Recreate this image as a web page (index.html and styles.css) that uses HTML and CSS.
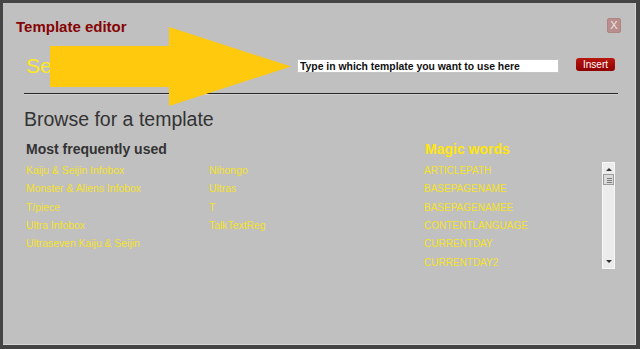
FILE: index.html
```html
<!DOCTYPE html>
<html lang="en">
<head>
    <meta charset="UTF-8">
    <meta name="viewport" content="width=device-width, initial-scale=1.0">
    <title>Template editor</title>
    <link rel="stylesheet" href="styles.css">
</head>
<body>
    <div class="dialog">
        <header class="dialog-header">
            <h1>Template editor</h1>
            <button class="close" type="button">X</button>
        </header>

        <div class="dialog-body">
            <form class="search-row" action="#">
                <span class="search-label">Select a template</span>
                <input type="text" class="template-input" value="Type in which template you want to use here">
                <button type="submit" class="insert">Insert</button>
            </form>

            <hr class="divider">

            <h2>Browse for a template</h2>

            <div class="browse">
                <section class="frequent">
                    <h3>Most frequently used</h3>
                    <ul class="template-list">
                        <li><a href="#">Kaiju &amp; Seijin Infobox</a></li>
                        <li><a href="#">Monster &amp; Aliens Infobox</a></li>
                        <li><a href="#">T/piece</a></li>
                        <li><a href="#">Ultra Infobox</a></li>
                        <li><a href="#">Ultraseven Kaiju &amp; Seijin</a></li>
                        <li><a href="#">Nihongo</a></li>
                        <li><a href="#">Ultras</a></li>
                        <li><a href="#">T</a></li>
                        <li><a href="#">TalkTextReg</a></li>
                    </ul>
                </section>

                <section class="magic">
                    <h3>Magic words</h3>
                    <div class="magic-box">
                        <ul class="magic-list">
                            <li><a href="#">ARTICLEPATH</a></li>
                            <li><a href="#">BASEPAGENAME</a></li>
                            <li><a href="#">BASEPAGENAMEE</a></li>
                            <li><a href="#">CONTENTLANGUAGE</a></li>
                            <li><a href="#">CURRENTDAY</a></li>
                            <li><a href="#">CURRENTDAY2</a></li>
                        </ul>
                        <div class="scrollbar">
                            <span class="scroll-btn up"></span>
                            <span class="scroll-thumb"></span>
                            <span class="scroll-btn down"></span>
                        </div>
                    </div>
                </section>
            </div>
        </div>

        <!-- pasted-in pointer from the screenshot -->
        <svg class="pointer" width="241" height="79" viewBox="0 0 241 79">
            <polygon points="0,19 119,19 119,0 241,39.5 119,79 119,60 0,60" fill="#ffc90e"/>
        </svg>
    </div>
</body>
</html>
```

FILE: styles.css
```css
html, body {
    margin: 0;
    background-color: #444;
}

body {
    font-family: "Liberation Sans", Arial, sans-serif;
    padding: 3px 4px 4px 3px;
}

.dialog {
    position: relative;
    height: 341px;
    background-color: #c0c0c0;
    border-right: 1px solid #d6d6d6;
    border-bottom: 1px solid #d6d6d6;
    overflow: hidden;
}

.dialog-header {
    display: flex;
    justify-content: space-between;
    align-items: flex-start;
    padding: 15px 14px 0 13px;
}

.dialog-header h1 {
    margin: 0;
    font-size: 15px;
    line-height: 18px;
    font-weight: bold;
    color: #850404;
}

.close {
    width: 14px;
    height: 15px;
    padding: 0;
    border: 1px solid #ad8684;
    border-radius: 2px;
    background-color: #b98e8c;
    color: #f0e4e4;
    font-family: "Liberation Sans", Arial, sans-serif;
    font-size: 11px;
    line-height: 13px;
    cursor: pointer;
}

.dialog-body {
    padding: 0 17px 0 21px;
}

.search-row {
    display: flex;
    align-items: center;
    height: 32px;
    margin: 14px 3px 0 2px;
}

.search-label {
    width: 271px;
    flex-shrink: 0;
    font-size: 21px;
    color: #ffe81c;
    white-space: nowrap;
}

.template-input {
    width: 262px;
    height: 14px;
    box-sizing: border-box;
    padding: 0 2px;
    border: 1px solid #c4c4c4;
    background-color: white;
    color: #111;
    font-family: "Liberation Sans", Arial, sans-serif;
    font-size: 10.4px;
    font-weight: bold;
    outline: none;
}

.insert {
    width: 39px;
    height: 13px;
    margin-left: 17px;
    margin-top: -3px;
    padding: 0;
    border: none;
    border-radius: 3px;
    background: linear-gradient(#b8170f, #8e0000);
    color: white;
    font-family: "Liberation Sans", Arial, sans-serif;
    font-size: 10px;
    line-height: 13px;
    cursor: pointer;
}

.divider {
    margin: 11px 0 0;
    border: none;
    border-top: 1px solid #262626;
    border-bottom: 1px solid #d2d2d2;
}

h2 {
    margin: 12px 0 0;
    font-size: 19.5px;
    line-height: 24px;
    font-weight: normal;
    color: #333;
}

.browse {
    display: grid;
    grid-template-columns: 398px 1fr;
    margin: 9px 3px 0 2px;
}

h3 {
    margin: 0 0 4px;
    font-size: 14px;
    line-height: 18px;
    font-weight: bold;
    color: #333;
}

.magic h3 {
    padding-left: 1px;
    color: #ffe60f;
}

ul {
    list-style: none;
    margin: 0;
    padding: 0;
}

li {
    font-size: 10px;
    line-height: 18.33px;
    white-space: nowrap;
}

.template-list li {
    font-size: 10.4px;
}

li a {
    color: #f5e22a;
    text-decoration: none;
}

li a:hover {
    text-decoration: underline;
}

.template-list {
    display: grid;
    grid-template-columns: 183px auto;
    grid-template-rows: repeat(5, 18.33px);
    grid-auto-flow: column;
}

.magic-box {
    display: flex;
    height: 107px;
}

.magic-list {
    flex: 1;
    overflow: hidden;
}

.scrollbar {
    display: flex;
    flex-direction: column;
    align-items: center;
    width: 13px;
    box-sizing: border-box;
    border: 1px solid #f8f8f8;
    background-color: #ececec;
}

.scroll-btn {
    width: 0;
    height: 0;
    border-left: 3px solid transparent;
    border-right: 3px solid transparent;
}

.scroll-btn.up {
    margin-top: 5px;
    border-bottom: 3px solid #333;
}

.scroll-btn.down {
    margin-top: auto;
    margin-bottom: 5px;
    border-top: 3px solid #333;
}

.scroll-thumb {
    width: 11px;
    height: 11px;
    margin-top: 3px;
    box-sizing: border-box;
    border: 1px solid #9c9c9c;
    background: repeating-linear-gradient(#dadada 0, #dadada 1px, #7a7a7a 1px, #7a7a7a 2px) 3px 2px / 5px 6px no-repeat, #dadada;
}

.pointer {
    position: absolute;
    left: 47px;
    top: 24px;
}
```
